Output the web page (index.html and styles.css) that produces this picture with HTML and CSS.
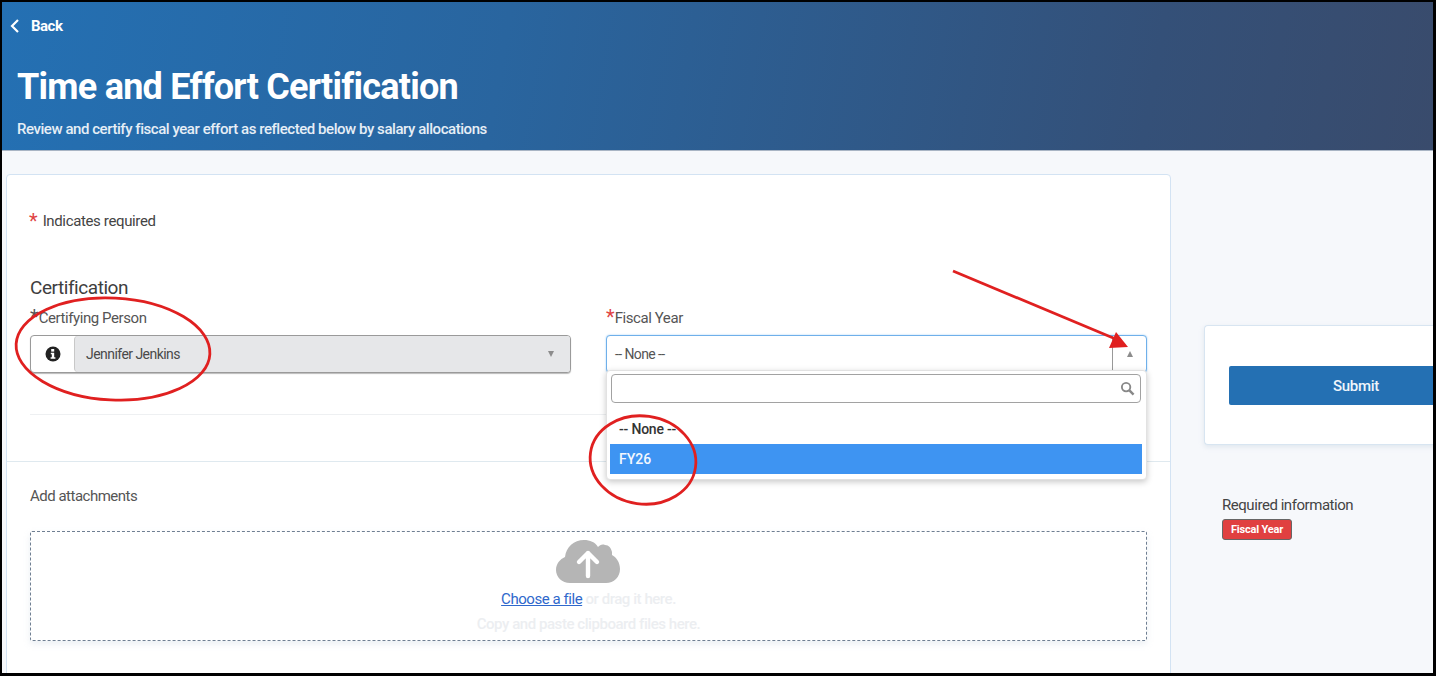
FILE: index.html
```html
<!DOCTYPE html>
<html lang="en">
<head>
<meta charset="utf-8">
<title>Time and Effort Certification</title>
<link rel="stylesheet" href="styles.css">
</head>
<body>
<div class="frame">
  <header class="hero">
    <a class="back"><svg class="back-icon" viewBox="0 0 10 16" width="10" height="16"><path d="M8 2 2 8l6 6" fill="none" stroke="#fff" stroke-width="2.2"/></svg><span>Back</span></a>
    <h1>Time and Effort Certification</h1>
    <p class="sub">Review and certify fiscal year effort as reflected below by salary allocations</p>
  </header>
  <main class="content">
    <section class="card">
      <div class="top">
        <p class="req-note"><span class="star">*</span>Indicates required</p>
        <h2>Certification</h2>
        <div class="fields">
          <div class="field">
            <label class="lbl"><span class="star dark">*</span>Certifying Person</label>
            <div class="lookup">
              <span class="info"><svg viewBox="0 0 16 16" width="16" height="16"><circle cx="8" cy="8" r="7.5" fill="#222"/><rect x="6.2" y="3" width="3" height="2.6" fill="#fff"/><path d="M5.8 6.8h3.4v4.4h1.2v1.5H5.6v-1.5h1.2V8.3h-1z" fill="#fff"/></svg></span>
              <div class="lookup-val"><span>Jennifer Jenkins</span><i class="tri down"></i></div>
            </div>
          </div>
          <div class="field">
            <label class="lbl"><span class="star">*</span>Fiscal Year</label>
            <div class="select">
              <span class="select-val">-- None --</span>
              <span class="select-btn"><i class="tri up"></i></span>
            </div>
            <div class="menu">
              <div class="search"><svg viewBox="0 0 16 16" width="15" height="15"><circle cx="6.5" cy="6.5" r="4.5" fill="none" stroke="#888" stroke-width="2"/><path d="m10 10 4.5 4.5" stroke="#888" stroke-width="2.6"/></svg></div>
              <div class="opt strong">-- None --</div>
              <div class="opt active">FY26</div>
            </div>
          </div>
        </div>
        <hr class="rule">
      </div>
      <div class="attach">
        <p class="attach-title">Add attachments</p>
        <div class="drop">
          <svg class="cloud" viewBox="0 0 64 45" width="64" height="45"><path d="M14 44C6 44 0 38 0 31c0-6 4-11 9-13 1-10 9-17 19-17 6 0 11 2 14 7 2-2 4-3 7-2 4 0 6 3 7 7v3c4 2 8 7 8 14 0 8-6 14-14 14z" fill="#b5b5b5"/><path d="M32 37V14M23 23l9-9 9 9" fill="none" stroke="#fff" stroke-width="4.4" stroke-linecap="round" stroke-linejoin="round"/></svg>
          <p class="drop-line"><a class="file-link">Choose a file</a><span class="faint"> or drag it here.</span></p>
          <p class="drop-line faint second">Copy and paste clipboard files here.</p>
        </div>
      </div>
    </section>
    <aside class="side">
      <div class="submit-card"><button class="submit">Submit</button></div>
      <p class="req-title">Required information</p>
      <span class="badge">Fiscal Year</span>
    </aside>
  </main>
  <svg class="marks" viewBox="0 0 1436 676" width="1436" height="676">
    <g fill="none" stroke="#e02020" stroke-width="2.8">
      <ellipse cx="113" cy="349" rx="97" ry="51" transform="rotate(3 113 349)"/>
      <ellipse cx="643" cy="460" rx="53" ry="44" transform="rotate(8 643 460)"/>
      <path d="M953 271 1118 340"/>
    </g>
    <path d="M1128 347 1109 348 1116 332z" fill="#e02020"/>
  </svg>
</div>
</body>
</html>
```
FILE: styles.css
```css
* { box-sizing: border-box; }
html, body { margin: 0; padding: 0; }
body { font-family: Roboto, "Liberation Sans", sans-serif; background: #fff; color: #444; }
.frame { position: relative; width: 1436px; height: 676px; overflow: hidden; border: 2px solid #000; border-width: 2px 3px 3px 2px; background: #f6f8fb; }
.hero { height: 149px; padding: 15px 16px 0 15px; background: linear-gradient(100deg, #2470b3 0%, #29659f 35%, #345078 80%, #394b6c 100%); color: #fff; border-bottom: 1px solid #a9b5c4; }
.back { display: flex; align-items: center; gap: 11px; margin-left: -7px; height: 18px; font-size: 15px; font-weight: 700; letter-spacing: -0.5px; }
h1 { margin: 29px 0 0; font-size: 36px; line-height: 46px; font-weight: 700; letter-spacing: -0.75px; white-space: nowrap; }
.sub { margin: 10px 0 0; font-size: 15px; line-height: 18px; font-weight: 500; letter-spacing: -0.45px; color: #e6eef6; white-space: nowrap; }
.content { display: flex; align-items: flex-start; padding: 23px 0 0 4px; gap: 33px; }
.card { width: 1165px; height: 561px; flex: none; background: #fff; border: 1px solid #d3e3f3; border-radius: 4px; }
.top { padding: 0 23px 0 23px; height: 286px; }
.req-note { margin: 0 0 0 -1px; padding-top: 37px; font-size: 15px; line-height: 18px; letter-spacing: -0.36px; color: #444; display: flex; }
.star { color: #e04444; font-size: 20px; line-height: 18px; letter-spacing: 0; }
.req-note .star { margin-right: 5px; }
.star.dark { color: #555; }
h2 { margin: 47px 0 0; font-size: 19px; line-height: 22px; font-weight: 400; letter-spacing: -0.45px; color: #3e3e3e; }
.fields { display: flex; gap: 35px; align-items: flex-start; }
.field { position: relative; width: 541px; }
.lbl { display: flex; height: 36px; font-size: 15px; line-height: 20px; letter-spacing: -0.42px; color: #555; padding-top: 9px; }
.lookup { display: flex; height: 38px; border: 1px solid #9a9a9a; border-radius: 4px; background: #fff; overflow: hidden; box-shadow: 0 1px 1px #bbb; }
.info { width: 43px; flex: none; display: flex; align-items: center; justify-content: center; }
.lookup-val { flex: 1; display: flex; align-items: center; justify-content: space-between; padding: 0 16px 0 11px; background: #e6e7e9; border-left: 1px solid #c8c8c8; border-radius: 4px 0 0 4px; font-size: 14px; letter-spacing: -0.55px; color: #4a4a4a; }
.tri { display: block; width: 0; height: 0; border-left: 3.5px solid transparent; border-right: 3.5px solid transparent; }
.tri.down { border-top: 6px solid #8c8c8c; }
.tri.up { border-bottom: 6px solid #8c8c8c; }
.select { display: flex; width: 541px; height: 38px; border: 1px solid #6fb0ea; border-radius: 4px; background: #fff; align-items: center; justify-content: space-between; box-shadow: 0 0 2px #9fcdf5; font-size: 14px; letter-spacing: -0.6px; color: #555; }
.select-val { padding-left: 8px; }
.select-btn { width: 34px; height: 100%; flex: none; display: flex; align-items: center; justify-content: center; border-left: 1px solid #999; }
.menu { position: absolute; left: 0; top: 71px; width: 541px; height: 110px; z-index: 2; background: #fff; border-radius: 4px; padding: 3px 4px 3px 3px; border: 1px solid #e2e2e2; box-shadow: 0 2px 6px rgba(0,0,0,.22); }
.search { height: 29px; margin: 0 1px; border: 1px solid #a2a2a2; border-radius: 4px; display: flex; align-items: center; justify-content: flex-end; padding-right: 5px; }
.opt { height: 30px; padding-left: 9px; display: flex; align-items: center; font-size: 14px; }
.opt.strong { margin-top: 11px; font-weight: 500; color: #333; letter-spacing: -0.2px; }
.opt.active { margin-top: 0; background: #3e94f2; color: #f3f8fe; font-weight: 500; }
.rule { margin: 41px 0 0; border: 0; border-top: 1px solid #eef0f2; }
.attach { border-top: 1px solid #dfe9ef; padding: 24px 23px 0 23px; }
.attach-title { margin: 0; font-size: 15px; line-height: 20px; letter-spacing: -0.5px; color: #555; }
.drop { margin-top: 25px; height: 110px; border: 1px dashed #6f7f92; border-radius: 2px; display: flex; flex-direction: column; align-items: center; box-shadow: 0 3px 6px rgba(180,195,210,.25); }
.cloud { margin-top: 7px; margin-right: 1px; flex: none; }
.drop-line { margin: 5px 0 0; font-size: 15px; line-height: 20px; letter-spacing: -0.45px; white-space: pre; }
.second { margin-top: 5px; }
.file-link { color: #2f68cc; text-decoration: underline; }
.faint { color: #eceef1; font-weight: 500; }
.side { width: 260px; flex: none; padding-top: 151px; }
.submit-card { width: 260px; height: 120px; padding: 40px 0 0 24px; background: #fff; border: 1px solid #d8e5f1; border-right: 0; border-radius: 4px 0 0 4px; box-shadow: 0 2px 5px rgba(190,205,220,.4); }
.submit { display: block; width: 254px; height: 39px; border: 0; border-radius: 2px 0 0 2px; background: #2470b3; color: #eef5fb; font: 500 15px Roboto, sans-serif; letter-spacing: -0.3px; }
.req-title { margin: 50px 0 0 18px; font-size: 15px; line-height: 20px; letter-spacing: -0.45px; color: #444; }
.badge { display: inline-block; margin: 4px 0 0 18px; height: 21px; padding: 0 8px; line-height: 19px; background: #e04040; color: #fff; font-size: 11px; font-weight: 700; letter-spacing: -0.2px; border: 1px solid #666; border-radius: 3px; }
.marks { position: absolute; left: -2px; top: -2px; z-index: 5; pointer-events: none; }
```
